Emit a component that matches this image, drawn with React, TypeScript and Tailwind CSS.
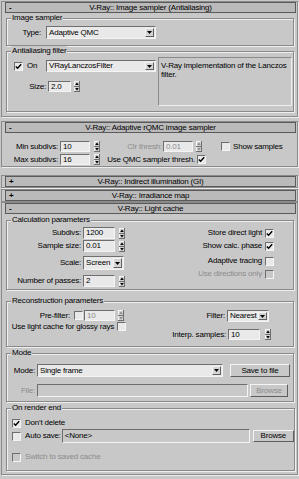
import React from "react";
import clsx from "clsx";

type Kids = { children?: React.ReactNode; className?: string };

function Header({ sign, title }: { sign: string; title: string }) {
  return (
    <div className="flex h-[11px] items-center border border-[#5a5a5a] bg-[#bababa] leading-none">
      <span className="w-[14px] pl-[3px] font-bold">{sign}</span>
      <span className="flex-1 text-center">{title}</span>
      <span className="w-[14px]" />
    </div>
  );
}

function Rollout({ children, className }: Kids) {
  return (
    <div
      className={clsx(
        "mx-[1px] border border-[#8a8a8a] pl-[3px] pr-[1px] shadow-[1px_1px_0_#ececec]",
        className
      )}
    >
      {children}
    </div>
  );
}

function Group({ label, children, className }: Kids & { label: string }) {
  return (
    <fieldset
      className={clsx(
        "ml-[1px] mr-[2px] border border-[#8a8a8a] shadow-[inset_1px_1px_0_#efefef,1px_1px_0_#efefef]",
        className
      )}
    >
      <legend className="ml-[4px] bg-[#c8c8c8] px-[1px] leading-[10px]">{label}</legend>
      {children}
    </fieldset>
  );
}

function Field({
  value,
  className,
  disabled,
  flat,
}: {
  value?: string;
  className?: string;
  disabled?: boolean;
  flat?: boolean;
}) {
  return (
    <div
      className={clsx(
        "flex items-center border border-t-[#6e6e6e] border-l-[#6e6e6e] border-b-[#f4f4f4] border-r-[#f4f4f4] pl-[2px] leading-none",
        flat ? "bg-[#c8c8c8]" : "bg-[#e9e9e9]",
        disabled && "text-[#8c8c8c]",
        className
      )}
    >
      {value}
    </div>
  );
}

function Spinner({ className, disabled }: { className?: string; disabled?: boolean }) {
  const c = disabled ? "#8c8c8c" : "#000";
  return (
    <svg width="6" height="11" viewBox="0 0 6 11" className={clsx("shrink-0", className)}>
      <rect x="0" y="0" width="6" height="11" fill="#d0d0d0" />
      <path d="M0 0.5H6M0.5 0V11" stroke="#f4f4f4" strokeWidth="1" />
      <path d="M0 10.5H6M5.5 0V11M0 5.5H6" stroke="#6e6e6e" strokeWidth="1" />
      <path d="M3 1.5L4.8 4H1.2Z" fill={c} />
      <path d="M1.2 7H4.8L3 9.5Z" fill={c} />
    </svg>
  );
}

function Combo({ value, className }: { value: string; className?: string }) {
  return (
    <div
      className={clsx(
        "flex items-center border border-t-[#6e6e6e] border-l-[#6e6e6e] border-b-[#f4f4f4] border-r-[#f4f4f4] bg-[#e9e9e9] leading-none",
        className
      )}
    >
      <span className="flex-1 truncate pl-[2px]">{value}</span>
      <span className="mr-[1px] flex h-[calc(100%-2px)] w-[9px] items-center justify-center border border-t-[#f4f4f4] border-l-[#f4f4f4] border-b-[#606060] border-r-[#606060] bg-[#d4d4d4]">
        <svg width="5" height="3" viewBox="0 0 5 3">
          <path d="M0 0H5L2.5 3Z" fill="#000" />
        </svg>
      </span>
    </div>
  );
}

function Check({ checked, disabled, className }: { checked?: boolean; disabled?: boolean; className?: string }) {
  return (
    <span
      className={clsx(
        "flex h-[9px] w-[9px] shrink-0 items-center justify-center border border-t-[#6e6e6e] border-l-[#6e6e6e] border-b-[#f4f4f4] border-r-[#f4f4f4]",
        disabled ? "bg-[#c8c8c8]" : "bg-[#e9e9e9]",
        className
      )}
    >
      {checked && (
        <svg width="7" height="7" viewBox="0 0 7 7">
          <path d="M0.8 3.4L2.6 5.3L6.2 1.2" fill="none" stroke="#000" strokeWidth="1.4" />
        </svg>
      )}
    </span>
  );
}

function Button({ children, className, disabled }: Kids & { disabled?: boolean }) {
  return (
    <div
      className={clsx(
        "flex shrink-0 items-center justify-center border border-t-[#f4f4f4] border-l-[#f4f4f4] border-b-[#5e5e5e] border-r-[#5e5e5e] bg-[#c8c8c8] leading-none",
        disabled && "text-[#8c8c8c]",
        className
      )}
    >
      {children}
    </div>
  );
}

const grey = "text-[#8c8c8c]";

export default function App() {
  return (
    <div className="h-[479px] w-[299px] overflow-hidden whitespace-nowrap bg-[#c8c8c8] pt-[1px] font-['Liberation_Sans',Arial,sans-serif] text-[8px] tracking-[-0.2px] text-black">
      <Rollout className="pb-[4px]">
        <Header sign="-" title="V-Ray:: Image sampler (Antialiasing)" />
        <Group label="Image sampler" className="pb-[6px]">
          <div className="mt-[3px] flex h-[13px] items-center">
            <span className="w-[39px] pr-[5px] text-right">Type:</span>
            <Combo value="Adaptive QMC" className="h-[13px] w-[110px]" />
          </div>
        </Group>
        <Group label="Antialiasing filter" className="pb-[5px]">
          <div className="flex items-start">
            <div className="w-[151px]">
              <div className="mt-[4px] flex h-[12px] items-center">
                <div className="flex w-[39px] items-center pl-[7px]">
                  <Check checked />
                  <span className="ml-[4px]">On</span>
                </div>
                <Combo value="VRayLanczosFilter" className="h-[12px] w-[110px]" />
              </div>
              <div className="mt-[9px] flex h-[11px] items-center">
                <span className="w-[41px] pr-[2px] text-right">Size:</span>
                <Field value="2.0" className="h-[11px] w-[23px]" />
                <Spinner className="ml-[3px]" />
              </div>
            </div>
            <div className="mt-[1px] h-[49px] w-[134px] whitespace-normal border border-t-[#8a8a8a] border-l-[#8a8a8a] border-b-[#f0f0f0] border-r-[#f0f0f0] px-[2px] pt-[3px] leading-[9px]">
              V-Ray implementation of the Lanczos filter.
            </div>
          </div>
        </Group>
      </Rollout>

      <Rollout className="mt-[4px] pb-[1px]">
        <Header sign="-" title="V-Ray:: Adaptive rQMC image sampler" />
        <div className="mt-[8px] flex h-[11px] items-center">
          <span className="w-[55px] pr-[2px] text-right">Min subdivs:</span>
          <Field value="10" className="h-[11px] w-[30px]" />
          <Spinner className="ml-[4px]" />
          <span className={clsx("w-[63px] pr-[1px] text-right", grey)}>Clr thresh:</span>
          <Field value="0.01" disabled className="h-[11px] w-[30px]" />
          <Spinner className="ml-[3px]" disabled />
          <Check className="ml-[19px]" />
          <span className="ml-[3px]">Show samples</span>
        </div>
        <div className="mt-[2px] flex h-[11px] items-center">
          <span className="w-[55px] pr-[2px] text-right">Max subdivs:</span>
          <Field value="16" className="h-[11px] w-[30px]" />
          <Spinner className="ml-[4px]" />
          <span className="w-[97px] pr-[2px] text-right">Use QMC sampler thresh.</span>
          <Check checked />
        </div>
      </Rollout>

      <Rollout className="mt-[8px]">
        <Header sign="+" title="V-Ray:: Indirect illumination (GI)" />
      </Rollout>
      <Rollout className="mt-[1px]">
        <Header sign="+" title="V-Ray:: Irradiance map" />
      </Rollout>

      <Rollout className="pb-[3px]">
        <Header sign="-" title="V-Ray:: Light cache" />
        <Group label="Calculation parameters" className="mt-[1px] pb-[2px]">
          <div className="flex">
            <div className="w-[123px]">
              <div className="mt-[2px] flex h-[12px] items-center">
                <span className="w-[76px] pr-[2px] text-right">Subdivs:</span>
                <Field value="1200" className="h-[12px] w-[32px]" />
                <Spinner className="ml-[4px]" />
              </div>
              <div className="mt-[1px] flex h-[12px] items-center">
                <span className="w-[76px] pr-[2px] text-right">Sample size:</span>
                <Field value="0.01" className="h-[12px] w-[32px]" />
                <Spinner className="ml-[4px]" />
              </div>
              <div className="mt-[4px] flex h-[14px] items-center">
                <span className="w-[76px] pr-[2px] text-right">Scale:</span>
                <Combo value="Screen" className="h-[14px] w-[41px]" />
              </div>
              <div className="mt-[5px] flex h-[12px] items-center">
                <span className="w-[76px] pr-[2px] text-right">Number of passes:</span>
                <Field value="2" className="h-[12px] w-[32px]" />
                <Spinner className="ml-[4px]" />
              </div>
            </div>
            <div className="flex flex-1 flex-col items-end pr-[19px]">
              <div className="mt-[2px] flex h-[12px] items-center">
                <span className="mr-[3px]">Store direct light</span>
                <Check checked />
              </div>
              <div className="mt-[1px] flex h-[12px] items-center">
                <span className="mr-[3px]">Show calc. phase</span>
                <Check checked />
              </div>
              <div className="mt-[3px] flex h-[12px] items-center">
                <span className="mr-[3px]">Adaptive tracing</span>
                <Check />
              </div>
              <div className="mt-[1px] flex h-[12px] items-center">
                <span className={clsx("mr-[3px]", grey)}>Use directions only</span>
                <Check disabled />
              </div>
            </div>
          </div>
        </Group>

        <Group label="Reconstruction parameters" className="mt-[6px] pb-[6px]">
          <div className="flex">
            <div className="w-[123px]">
              <div className="mt-[4px] flex h-[11px] items-center">
                <span className="w-[67px] pr-[4px] text-right">Pre-filter:</span>
                <Check />
                <Field value="10" disabled className="ml-[1px] h-[11px] w-[31px]" />
                <Spinner className="ml-[3px]" disabled />
              </div>
              <div className="flex h-[11px] items-center">
                <span className="w-[110px] pr-[3px] text-right">Use light cache for glossy rays</span>
                <Check />
              </div>
            </div>
            <div className="flex-1">
              <div className="mt-[4px] flex h-[12px] items-center">
                <span className="w-[97px] pr-[2px] text-right">Filter:</span>
                <Combo value="Nearest" className="h-[12px] w-[42px]" />
              </div>
              <div className="mt-[7px] flex h-[11px] items-center">
                <span className="w-[98px] pr-[2px] text-right">Interp. samples:</span>
                <Field value="10" className="h-[11px] w-[32px]" />
                <Spinner className="ml-[5px]" />
              </div>
            </div>
          </div>
        </Group>

        <Group label="Mode" className="mt-[1px] pb-[4px]">
          <div className="mt-[6px] flex h-[13px] items-center">
            <span className="w-[30px] pr-[2px] text-right">Mode:</span>
            <Combo value="Single frame" className="h-[13px] w-[186px]" />
            <Button className="ml-[7px] h-[13px] w-[60px]">Save to file</Button>
          </div>
          <div className="mt-[7px] flex h-[13px] items-center">
            <span className={clsx("w-[30px] pr-[2px] text-right", grey)}>File:</span>
            <Field flat className="h-[13px] w-[211px]" />
            <Button disabled className="ml-[2px] h-[13px] w-[38px]">
              Browse
            </Button>
          </div>
        </Group>

        <Group label="On render end" className="mt-[1px] pb-[8px]">
          <div className="mt-[5px] flex h-[10px] items-center pl-[5px]">
            <Check checked />
            <span className="ml-[4px]">Don't delete</span>
          </div>
          <div className="mt-[1px] flex h-[14px] items-center pl-[5px]">
            <Check />
            <span className="pl-[4px] pr-[1px]">Auto save:</span>
            <Field flat value="<None>" className="h-[14px] w-[188px]" />
            <Button className="ml-[3px] h-[12px] w-[41px]">Browse</Button>
          </div>
          <div className="mt-[9px] flex h-[10px] items-center pl-[5px]">
            <Check disabled />
            <span className={clsx("ml-[4px]", grey)}>Switch to saved cache</span>
          </div>
        </Group>
      </Rollout>
    </div>
  );
}
